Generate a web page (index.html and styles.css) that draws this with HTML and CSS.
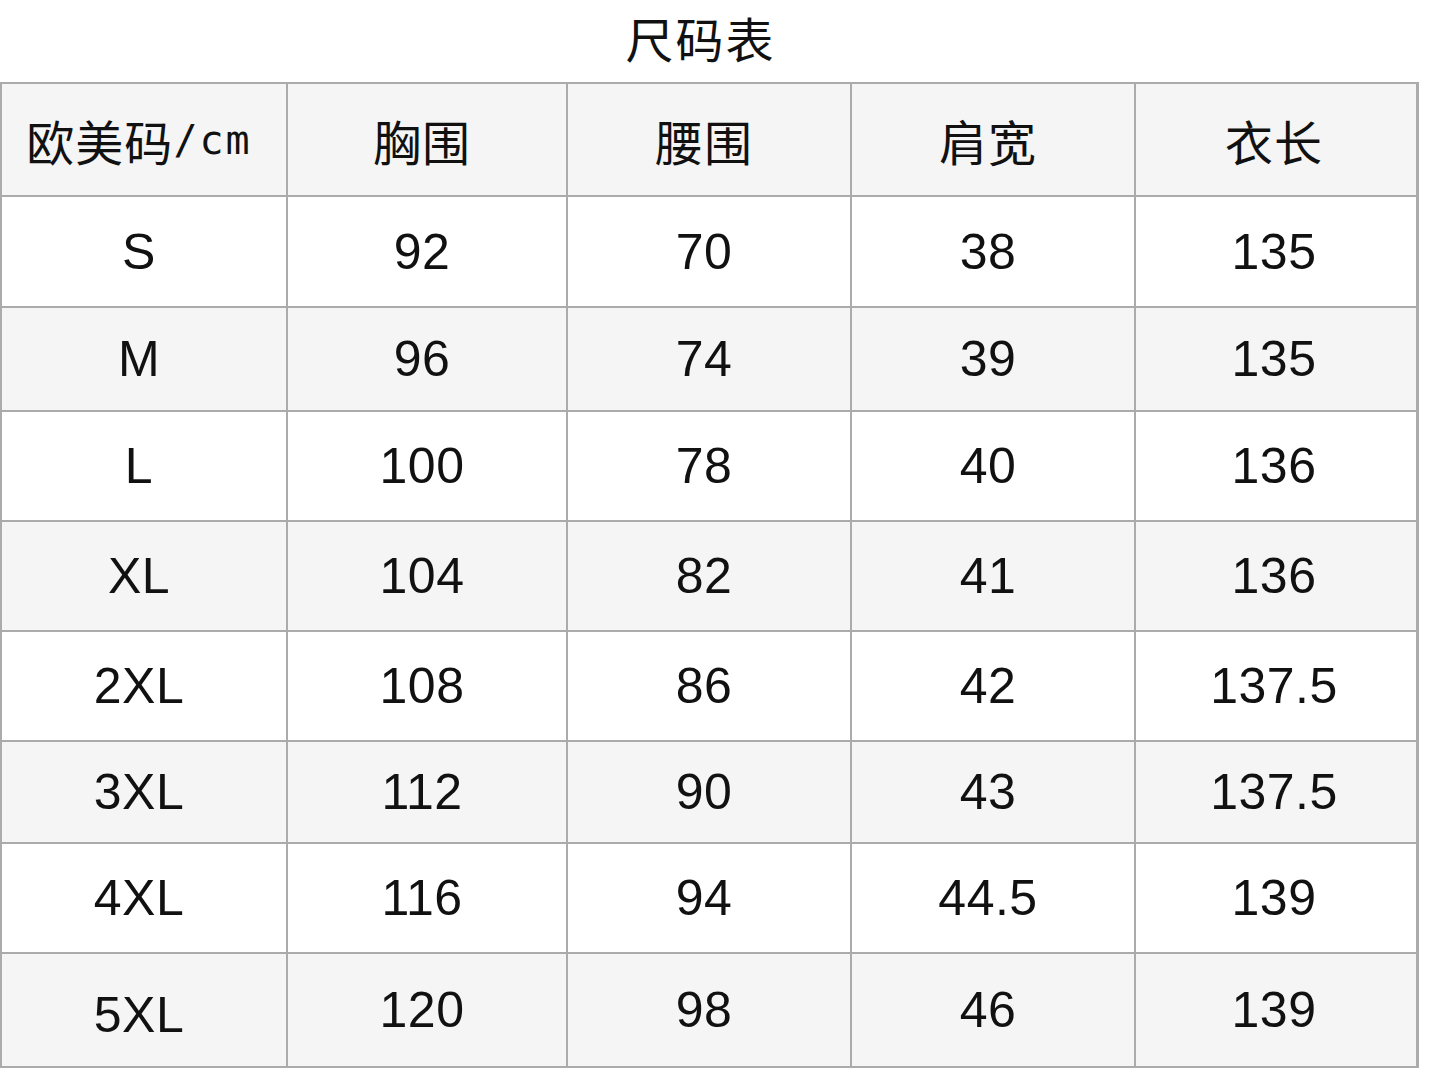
FILE: index.html
```html
<!DOCTYPE html>
<html lang="zh-CN">
<head>
<meta charset="utf-8">
<title>尺码表</title>
<link rel="stylesheet" href="styles.css">
</head>
<body>
<div class="page">
  <div class="title">尺码表</div>
  <div class="grid">
    <div class="row alt head">
      <div class="cell">欧美码<span class="unit">/cm</span></div>
      <div class="cell">胸围</div>
      <div class="cell">腰围</div>
      <div class="cell">肩宽</div>
      <div class="cell last">衣长</div>
    </div>
    <div class="row">
      <div class="cell">S</div><div class="cell">92</div><div class="cell">70</div><div class="cell">38</div><div class="cell last">135</div>
    </div>
    <div class="row alt">
      <div class="cell">M</div><div class="cell">96</div><div class="cell">74</div><div class="cell">39</div><div class="cell last">135</div>
    </div>
    <div class="row">
      <div class="cell">L</div><div class="cell">100</div><div class="cell">78</div><div class="cell">40</div><div class="cell last">136</div>
    </div>
    <div class="row alt">
      <div class="cell">XL</div><div class="cell">104</div><div class="cell">82</div><div class="cell">41</div><div class="cell last">136</div>
    </div>
    <div class="row">
      <div class="cell">2XL</div><div class="cell">108</div><div class="cell">86</div><div class="cell">42</div><div class="cell last">137.5</div>
    </div>
    <div class="row alt">
      <div class="cell">3XL</div><div class="cell">112</div><div class="cell">90</div><div class="cell">43</div><div class="cell last">137.5</div>
    </div>
    <div class="row">
      <div class="cell">4XL</div><div class="cell">116</div><div class="cell">94</div><div class="cell">44.5</div><div class="cell last">139</div>
    </div>
    <div class="row alt">
      <div class="cell low">5XL</div><div class="cell">120</div><div class="cell">98</div><div class="cell">46</div><div class="cell last">139</div>
    </div>
  </div>
</div>
</body>
</html>
```

FILE: styles.css
```css
html, body {
  margin: 0;
  padding: 0;
  background: #ffffff;
}

.page {
  width: 1419px;
  color: #111111;
}

.title {
  height: 82px;
  line-height: 74px;
  text-align: center;
  padding-right: 18px;
  box-sizing: border-box;
  font-family: "Noto Sans CJK SC", sans-serif;
  font-weight: 400;
  font-size: 48px;
  letter-spacing: 2px;
  color: #111111;
}

.grid {
  display: grid;
  grid-template-columns: 284px 278px 282px 282px 280px;
  grid-template-rows: 111px 109px 102px 108px 108px 108px 100px 108px 112px;
  gap: 2px;
  padding: 2px 3px 2px 2px;
  background: #ababab;
  width: fit-content;
}

.row {
  display: contents;
}

.cell {
  display: flex;
  align-items: center;
  justify-content: center;
  padding-right: 10px;
  background: #ffffff;
  font-family: "Liberation Sans", Arial, sans-serif;
  font-size: 50px;
  letter-spacing: 0.5px;
  color: #111111;
}

.row.alt .cell {
  background: #f5f5f5;
}

.cell.last {
  padding-right: 4px;
}

.cell.low {
  padding-top: 10px;
}

.head .cell {
  font-family: "Noto Sans CJK SC", sans-serif;
  font-weight: 400;
  font-size: 48px;
  letter-spacing: 1px;
  padding-top: 0;
}

.head .unit {
  font-family: "DejaVu Sans Mono", "Liberation Mono", monospace;
  font-weight: 400;
  font-size: 40px;
  letter-spacing: 2px;
}
```
